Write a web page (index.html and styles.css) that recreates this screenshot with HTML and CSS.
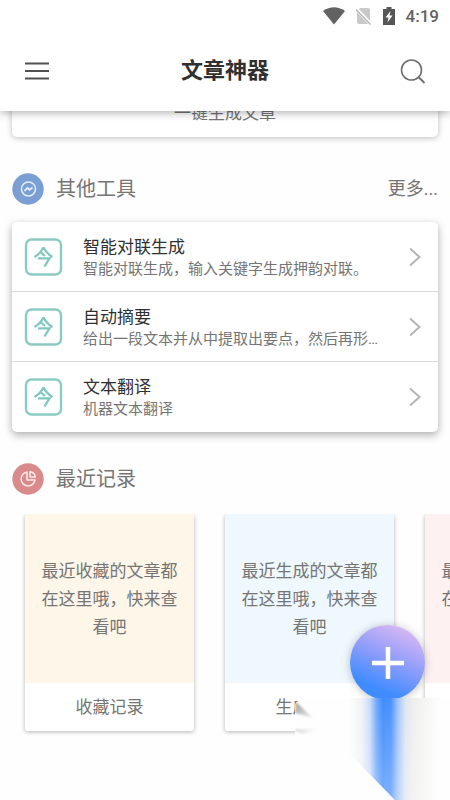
FILE: index.html
```html
<!DOCTYPE html>
<html lang="zh-CN">
<head>
<meta charset="utf-8">
<meta name="viewport" content="width=device-width, initial-scale=1">
<title>文章神器</title>
<link rel="stylesheet" href="styles.css">
</head>
<body>
<svg class="defs" aria-hidden="true">
  <symbol id="jin" viewBox="0 0 38 38">
    <rect x="1.5" y="1.5" width="35" height="35" rx="5.5" fill="none" stroke="#8accc2" stroke-width="2.4"/>
    <path d="M19 9.5Q15.500 16 10 19M19 9.500Q22.500 16 28 19M16.500 14.500L20.500 18M13.500 20.300H25L20 28.500" fill="none" stroke="#80c8bd" stroke-width="2.300"/>
  </symbol>
  <symbol id="chevron" viewBox="0 0 12 20">
    <path d="M1 1.500L10.500 10L1 18.500" fill="none" stroke="#b5b5b5" stroke-width="2"/>
  </symbol>
</svg>

<header class="top">
  <div class="status">
    <svg width="22" height="18" viewBox="0 0 22 18"><path d="M0 4Q11-3.500 22 4L11 17.500Z" fill="#626262"/></svg>
    <svg width="16" height="18" viewBox="0 0 16 18"><path d="M4 1H12Q14 1 14 3V15Q14 17 12 17H3Q1 17 1 15V5Z" fill="#c9c9c9"/><path d="M0 1.500L15 17.500" stroke="#fff" stroke-width="3.500"/><path d="M0 2.500L14.500 17.500" stroke="#b8b8b8" stroke-width="1.500"/></svg>
    <svg width="12" height="18" viewBox="0 0 12 18"><path d="M3.500 0H8.500V2H12V18H0V2H3.500Z" fill="#565656"/><path d="M7.500 4L2.500 10.500H5.500L4.500 15.500L9.500 8.500H6.500Z" fill="#fff"/></svg>
    <span class="clock">4:19</span>
  </div>
  <div class="bar">
    <button class="icon-button" type="button" aria-label="菜单">
      <svg width="26" height="26" viewBox="0 0 26 26"><path d="M1 5.500H25M1 13H25M1 20.500H25" stroke="#505050" stroke-width="2"/></svg>
    </button>
    <h1>文章神器</h1>
    <button class="icon-button" type="button" aria-label="搜索">
      <svg width="26" height="26" viewBox="0 0 26 26"><circle cx="11.500" cy="12" r="10" fill="none" stroke="#707070" stroke-width="1.600"/><path d="M18.500 19L24.500 25" stroke="#707070" stroke-width="2"/></svg>
    </button>
  </div>
</header>

<main>
  <a class="panel generate" href="#generate">一键生成文章</a>

  <section class="tools">
    <div class="section-head">
      <svg width="32" height="32" viewBox="0 0 32 32"><circle cx="16" cy="16" r="15.700" fill="#7b9fd3"/><circle cx="16.500" cy="16" r="7" fill="none" stroke="#e7effa" stroke-width="1.500"/><path d="M12.500 18L15.500 14.800L17.500 16.800L20.500 14.500" fill="none" stroke="#e7effa" stroke-width="1.700"/></svg>
      <h2>其他工具</h2>
      <a class="more" href="#more">更多...</a>
    </div>
    <ul class="panel list">
      <li><a class="row" href="#couplet">
        <svg class="badge"><use href="#jin"/></svg>
        <span class="text"><strong>智能对联生成</strong><small>智能对联生成，输入关键字生成押韵对联。</small></span>
        <svg class="chevron"><use href="#chevron"/></svg>
      </a></li>
      <li><a class="row" href="#summary">
        <svg class="badge"><use href="#jin"/></svg>
        <span class="text"><strong>自动摘要</strong><small>给出一段文本并从中提取出要点，然后再形…</small></span>
        <svg class="chevron"><use href="#chevron"/></svg>
      </a></li>
      <li><a class="row" href="#translate">
        <svg class="badge"><use href="#jin"/></svg>
        <span class="text"><strong>文本翻译</strong><small>机器文本翻译</small></span>
        <svg class="chevron"><use href="#chevron"/></svg>
      </a></li>
    </ul>
  </section>

  <section class="recent">
    <div class="section-head">
      <svg width="32" height="32" viewBox="0 0 32 32"><circle cx="16" cy="16" r="15.700" fill="#d98b8c"/><path d="M15 9A7 7 0 1 0 23 17H15Z" fill="none" stroke="#fbeaea" stroke-width="1.500" stroke-linejoin="round"/><path d="M18 8.700A6 6 0 0 1 23.300 14H18Z" fill="none" stroke="#fbeaea" stroke-width="1.500" stroke-linejoin="round"/></svg>
      <h2>最近记录</h2>
    </div>
    <div class="cards">
      <a class="card" href="#saved"><span class="face cream">最近收藏的文章都在这里哦，快来查看吧</span><span class="label">收藏记录</span></a>
      <a class="card" href="#generated"><span class="face sky">最近生成的文章都在这里哦，快来查看吧</span><span class="label">生成记录</span></a>
      <a class="card" href="#viewed"><span class="face rose">最近浏览的文章都在这里哦，快来查看吧</span><span class="label">浏览记录</span></a>
    </div>
  </section>
</main>

<button class="fab" type="button" aria-label="新建">
  <svg width="34" height="34" viewBox="0 0 34 34"><path d="M17 1V33M1 17H33" stroke="#fff" stroke-width="4.500"/></svg>
</button>
<svg class="beam" viewBox="0 0 155 102" aria-hidden="true">
  <defs>
    <linearGradient id="beam-x">
      <stop offset="0" stop-color="#fefefe"/>
      <stop offset=".14" stop-color="#f1f2f5"/>
      <stop offset=".23" stop-color="#c9dcfb"/>
      <stop offset=".3" stop-color="#74aafb"/>
      <stop offset=".37" stop-color="#418dfb"/>
      <stop offset=".46" stop-color="#4a91fb"/>
      <stop offset=".54" stop-color="#a4c5f8"/>
      <stop offset=".62" stop-color="#dde6f3"/>
      <stop offset=".7" stop-color="#efeeed"/>
      <stop offset="1" stop-color="#fefefe"/>
    </linearGradient>
    <linearGradient id="beam-y" x2="0" y2="1">
      <stop offset="0" stop-color="#fff" stop-opacity="0"/>
      <stop offset="1" stop-color="#fff" stop-opacity=".3"/>
    </linearGradient>
    <linearGradient id="fold" x2="1" y2="1">
      <stop offset="0" stop-color="#999"/>
      <stop offset="1" stop-color="#f4f4f4"/>
    </linearGradient>
    <linearGradient id="edge">
      <stop offset="0" stop-color="#ddd"/>
      <stop offset="1" stop-color="#fefefe"/>
    </linearGradient>
    <filter id="soft"><feGaussianBlur stdDeviation=".8"/></filter>
  </defs>
  <path d="M6 0H155V102H0V6Z" fill="#fefefe"/>
  <path d="M54 0H145V102H100L54 55Z" fill="url(#beam-x)"/>
  <path d="M54 0H145V102H100L54 55Z" fill="url(#beam-y)"/>
  <path d="M1 4L18 20L0 15Z" fill="url(#fold)" filter="url(#soft)"/>
  <path d="M0 31H24L8 36L0 33Z" fill="url(#edge)" filter="url(#soft)"/>
</svg>
</body>
</html>
```

FILE: styles.css
```css
* {
  box-sizing: border-box;
}

body {
  margin: 0;
  min-height: 100vh;
  overflow-x: hidden;
  background: #fefefe;
  color: #757575;
  font-family: Roboto, "Noto Sans CJK SC", sans-serif;
  font-size: 17px;
  line-height: 24px;
}

h1,
h2,
ul {
  margin: 0;
  padding: 0;
  list-style: none;
}

a {
  color: inherit;
  text-decoration: none;
}

svg {
  flex: none;
}

button {
  display: flex;
  align-items: center;
  justify-content: center;
  padding: 0;
  border: 0;
  background: none;
}

.defs {
  position: absolute;
  width: 0;
  height: 0;
}

.top {
  position: sticky;
  top: 0;
  z-index: 2;
  background: #fff;
  box-shadow: 0 2px 8px rgba(0, 0, 0, 0.3);
}

.status {
  display: flex;
  align-items: center;
  justify-content: flex-end;
  gap: 11px;
  height: 31px;
  padding-right: 11px;
}

.clock {
  color: #626262;
  font-size: 17px;
  font-weight: 500;
}

.bar {
  display: flex;
  align-items: center;
  justify-content: space-between;
  height: 80px;
  padding: 0 24px;
}

h1 {
  color: #303030;
  font-size: 22px;
  font-weight: 700;
  line-height: 32px;
}

main {
  padding-bottom: 69px;
}

.panel {
  display: block;
  margin: 0 12px;
  border-radius: 5px;
  background: #fff;
  box-shadow: 0 3px 9px rgba(0, 0, 0, 0.32);
}

.generate {
  margin-top: -31px;
  padding: 21px 0 12px;
  box-shadow: 0 1px 6px rgba(0, 0, 0, 0.26);
  text-align: center;
}

.section-head {
  display: flex;
  align-items: center;
  gap: 12px;
  padding: 0 12px;
}

h2 {
  font-size: 20px;
  font-weight: 400;
  line-height: 32px;
}

.more {
  margin-left: auto;
  font-size: 18px;
}

.tools {
  margin-top: 36px;
}

.list {
  margin-top: 17px;
}

.row {
  display: flex;
  align-items: center;
  height: 70px;
  padding: 0 17px 0 12px;
}

.list li:not(:last-child) .row {
  border-bottom: 1px solid #d9d9d9;
}

.badge {
  width: 39px;
  height: 38px;
}

.text {
  display: flex;
  flex: 1;
  flex-direction: column;
  min-width: 0;
  margin: 0 24px 0 20px;
}

.text strong {
  color: #303030;
  font-weight: 400;
}

.text small {
  overflow: hidden;
  font-size: 15px;
  line-height: 20px;
  text-overflow: ellipsis;
  white-space: nowrap;
}

.chevron {
  width: 12px;
  height: 20px;
}

.recent {
  margin-top: 31px;
}

.cards {
  display: flex;
  gap: 31px;
  margin-top: 19px;
  padding: 0 0 5px 25px;
  overflow: hidden;
}

.card {
  flex: none;
  width: 169px;
  border-radius: 3px;
  background: #fff;
  box-shadow: 0 1px 4px rgba(0, 0, 0, 0.3);
}

.face {
  display: flex;
  align-items: center;
  aspect-ratio: 1;
  padding: 0 14px;
  border-radius: 3px 3px 0 0;
  line-height: 28px;
  text-align: center;
}

.cream {
  background: #fef6e9;
}

.sky {
  background: #eff8ff;
}

.rose {
  background: #fef1f1;
}

.label {
  display: block;
  padding: 12px 0;
  text-align: center;
}

.fab {
  position: fixed;
  right: 25px;
  bottom: 100px;
  z-index: 3;
  width: 75px;
  height: 75px;
  border-radius: 50%;
  background: linear-gradient(205deg, #dfb9f3 8%, #8f9dfa 45%, #3f8cff 78%);
  box-shadow: 0 1px 8px rgba(0, 0, 0, 0.25);
}

.beam {
  position: fixed;
  right: 0;
  bottom: 0;
  z-index: 4;
  width: 155px;
  height: 102px;
  pointer-events: none;
}
```
